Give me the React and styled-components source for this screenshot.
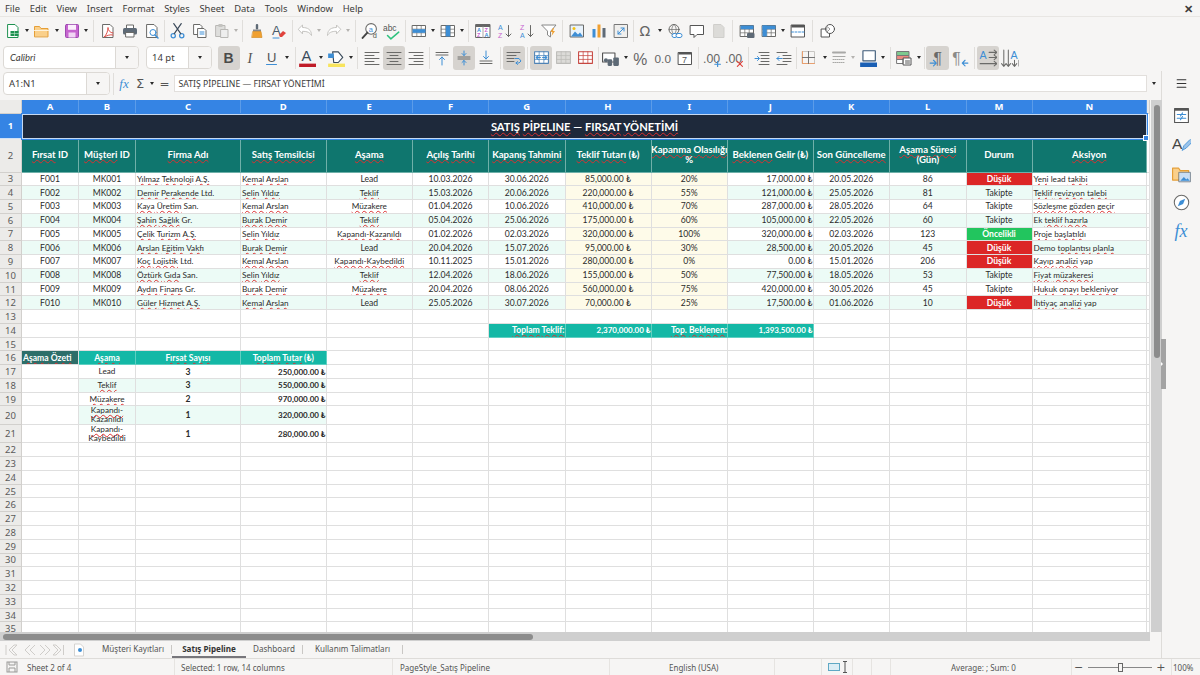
import React from 'react';
import styled, { createGlobalStyle } from 'styled-components';
import { Menu as MenuIcon } from 'lucide-react';

const GlobalStyle = createGlobalStyle`
    html, body { margin: 0; padding: 0; background: #f6f5f4; }
    * { box-sizing: border-box; }
`;

const UI_FONT = '"Noto Sans", "Open Sans", sans-serif';
const CELL_FONT = 'Lato, "DejaVu Sans", sans-serif';

const Page = styled.div`
    width: 1200px;
    height: 675px;
    overflow: hidden;
    display: flex;
    flex-direction: column;
    position: relative;
    background: #f6f5f4;
    font-family: ${UI_FONT};
    color: #3d3c3a;
`;
const MenuBar = styled.div`
    height: 17px;
    flex: none;
    display: flex;
    align-items: center;
    justify-content: space-between;
    padding: 0 7px 0 5px;
    font-size: 9.4px;
    border-bottom: 1px solid #e8e6e3;
`;
const MenuItems = styled.div`
    display: flex;
    gap: 9.8px;
`;
const CloseX = styled.span`
    font-size: 11px;
    font-weight: 700;
`;
const ToolBar = styled.div`
    height: ${p => p.$h}px;
    flex: none;
    display: flex;
    align-items: center;
    padding-left: ${p => p.$pad}px;
`;
const Slot = styled.div`
    flex: none;
    width: ${p => p.$w || 22}px;
    height: 24px;
    display: flex;
    align-items: center;
    justify-content: center;
    border-radius: 3px;
    background: ${p => (p.$active ? '#d6d3cf' : 'transparent')};
`;
const Arrow = styled.i`
    width: 0;
    height: 0;
    border-left: 2.5px solid transparent;
    border-right: 2.5px solid transparent;
    border-top: 3px solid ${p => (p.$off ? '#b5b3b0' : '#2a2a2a')};
`;
const Sep = styled.div`
    flex: none;
    width: ${p => p.$w}px;
    height: 22px;
    display: flex;
    justify-content: center;
    &::after {
        content: '';
        width: 1px;
        background: #e0dedb;
    }
`;
const Combo = styled.div`
    flex: none;
    width: ${p => p.$w}px;
    height: 23px;
    margin-right: ${p => p.$mr || 0}px;
    display: flex;
    background: #fff;
    border: 1px solid #dcd9d5;
    border-radius: 4px;
    overflow: hidden;
`;
const ComboText = styled.div`
    flex: 1;
    display: flex;
    align-items: center;
    padding-left: ${p => p.$pl || 5}px;
    font-size: 9.5px;
    font-style: ${p => (p.$italic ? 'italic' : 'normal')};
    font-family: ${p => (p.$italic ? CELL_FONT : UI_FONT)};
`;
const ComboBtn = styled.div`
    flex: none;
    width: 23px;
    display: flex;
    align-items: center;
    justify-content: center;
    background: #f6f5f4;
    border-left: 1px solid #dcd9d5;
`;
const Body = styled.div`
    flex: 1;
    min-height: 0;
    display: flex;
`;
const WorkArea = styled.div`
    width: 1162px;
    flex: none;
    display: flex;
    flex-direction: column;
    border-right: 1px solid #dedcd9;
`;
const FormulaBar = styled.div`
    height: 25px;
    flex: none;
    display: flex;
    align-items: center;
    padding-left: 3px;
`;
const FxText = styled.span`
    font-family: "Liberation Serif", serif;
    font-style: italic;
    font-size: ${p => p.$size || 13}px;
    color: #3d8ed5;
`;
const SumText = styled.span`
    font-family: "DejaVu Sans", sans-serif;
    font-size: ${p => p.$size}px;
    color: #555;
`;
const FormulaInput = styled.div`
    flex: none;
    width: 973px;
    height: 17px;
    margin-left: 0.5px;
    padding-left: 4px;
    display: flex;
    align-items: center;
    background: #fff;
    border: 1px solid #e2dfdc;
    font-size: 8.7px;
`;
const SheetRow = styled.div`
    flex: 1;
    min-height: 0;
    margin-top: 4px;
    display: flex;
`;
const Sheet = styled.div`
    width: 1150px;
    flex: none;
    overflow: hidden;
    background: #fff;
    display: grid;
    grid-template-columns: ${p => p.$cols};
    grid-template-rows: ${p => p.$rows};
    font-family: ${CELL_FONT};
`;
const Cell = styled.div`
    min-width: 0;
    display: flex;
    align-items: center;
    justify-content: ${p => p.$align || 'flex-start'};
    white-space: nowrap;
    text-align: center;
    overflow: hidden;
    line-height: ${p => (p.$wrap ? '9px' : 'normal')};
    padding: ${p => (p.$align === 'flex-end' ? '0 0 0 1px' : '0 1px')};
    font-size: ${p => p.$size || 8.6}px;
    font-weight: ${p => (p.$bold ? 700 : 400)};
    color: ${p => p.$color || '#2b2b2b'};
    background: ${p => p.$bg || '#fff'};
    border-right: 1px solid ${p => p.$line || '#dfdfdf'};
    border-bottom: 1px solid ${p => p.$line || '#dfdfdf'};
`;
const HeadCell = styled(Cell)`
    font-family: ${UI_FONT};
    font-size: 9.5px;
    justify-content: center;
    font-weight: ${p => (p.$on ? 700 : 400)};
    color: ${p => (p.$on ? '#fff' : '#5a5a5a')};
    background: ${p => (p.$on ? '#3584e4' : '#ecebe9')};
    border-right: 1px solid ${p => (p.$on ? '#5b9ce9' : '#d2d0cd')};
    border-bottom: 1px solid ${p => (p.$on ? '#cfe1f7' : '#d2d0cd')};
`;
const TableHead = styled(Cell)`
    justify-content: center;
    line-height: 10px;
    padding: 0;
    font-size: 9.6px;
    font-weight: 700;
    color: #fff;
    background: #0f766e;
    border-color: #6fb0a9;
`;
const TitleCell = styled(Cell)`
    grid-column: span 14;
    position: relative;
    overflow: visible;
    justify-content: center;
    font-size: 11.2px;
    font-weight: 700;
    color: #fff;
    background: #1e293b;
    border: none;
`;
const Selection = styled.div`
    position: absolute;
    inset: 0;
    border: 1px solid #c5d9f2;
    outline: 1px solid #3584e4;
    pointer-events: none;
    &::after {
        content: '';
        position: absolute;
        right: -3px;
        bottom: -3px;
        width: 4px;
        height: 4px;
        background: #3584e4;
        border: 0.5px solid #fff;
    }
`;
const Spell = styled.span`
    text-decoration: underline wavy #dc2f2f 0.6px;
    text-underline-offset: 1px;
    text-decoration-skip-ink: none;
`;
const VScroll = styled.div`
    flex: 1;
    margin-left: 1px;
    background: #cfcfcf;
    padding: 5px 2.5px 0;
`;
const VThumb = styled.div`
    height: 253px;
    width: 6px;
    border-radius: 3px;
    background: #8c8c8c;
`;
const HScrollRow = styled.div`
    height: 9px;
    flex: none;
    width: 1150px;
    background: #cfcfcf;
    padding: 1.5px 3px;
`;
const HThumb = styled.div`
    height: 6px;
    width: 530px;
    border-radius: 3px;
    background: #8c8c8c;
`;
const TabBar = styled.div`
    height: 17px;
    flex: none;
    display: flex;
    align-items: center;
    padding-left: 5px;
    font-size: 8.1px;
`;
const TabNav = styled.div`
    width: 62px;
    flex: none;
    display: flex;
`;
const NewTab = styled.div`
    width: 22px;
    margin-left: 6px;
    flex: none;
    display: flex;
    align-items: center;
    gap: 1px;
`;
const Tab = styled.div`
    flex: none;
    height: 100%;
    width: ${p => p.$w}px;
    display: flex;
    align-items: center;
    justify-content: center;
    font-weight: ${p => (p.$on ? 700 : 400)};
    color: ${p => (p.$on ? '#333' : '#555')};
    border-bottom: 2px solid ${p => (p.$on ? '#77767b' : 'transparent')};
`;
const TabSep = styled.div`
    width: 1px;
    height: 9px;
    flex: none;
    background: #c9c7c4;
`;
const SideBar = styled.div`
    flex: 1;
    display: flex;
    flex-direction: column;
    align-items: center;
    padding-top: 2px;
    gap: 7.5px;
`;
const SideBtn = styled.div`
    width: 22px;
    height: 21.5px;
    display: flex;
    align-items: center;
    justify-content: center;
    &:first-child {
        margin-bottom: 3px;
    }
`;
const SideHandle = styled.div`
    position: absolute;
    left: 1161px;
    top: 339px;
    width: 4.5px;
    height: 50px;
    background: #a3a3a3;
    display: flex;
    align-items: center;
    &::after {
        content: '';
        border-left: 2.5px solid #fff;
        border-top: 2.5px solid transparent;
        border-bottom: 2.5px solid transparent;
    }
`;
const StatusBar = styled.div`
    height: 17px;
    flex: none;
    display: flex;
    align-items: center;
    font-size: 8px;
    color: #555;
    border-top: 1px solid #dedcd9;
`;
const StatusCell = styled.div`
    flex: none;
    width: ${p => p.$w}px;
    height: 100%;
    display: flex;
    align-items: center;
    gap: ${p => p.$gap || 0}px;
    padding-left: ${p => p.$pl || 0}px;
    border-right: 1px solid ${p => (p.$noline ? 'transparent' : '#e6e4e1')};
`;
const Slider = styled.div`
    width: 64px;
    height: 1px;
    margin: 0 4px 0 5px;
    background: #888;
    display: flex;
    justify-content: center;
    align-items: center;
    &::after {
        content: '';
        width: 3px;
        height: 7px;
        border: 1px solid #666;
        background: #f6f5f4;
    }
`;

// icons
const Ico = ({ children, s = 16 }) => (
    <svg width={s} height={s} viewBox="0 0 16 16" fill="none" strokeLinecap="round" strokeLinejoin="round">{children}</svg>
);
const GREY = '#6a6a68';
const BLUE = '#3d8ed5';
const Lines = ({ rows, c = GREY }) => rows.map(([x1, x2, y], i) => <path key={i} d={`M${x1} ${y}H${x2}`} stroke={c} />);
const Grid = ({ c = GREY, fill }) => (
    <>
        <rect x="1.5" y="2.5" width="13" height="11" fill={fill || '#fff'} stroke={c} />
        <path d="M1.5 6.2h13M1.5 9.8h13M5.8 2.5v11M10.2 2.5v11" stroke={c} strokeWidth=".7" />
    </>
);
const Txt = ({ x, y, c = GREY, size = 8, w = 400, i, f = 'Liberation Sans', children }) => (
    <text x={x} y={y} fill={c} fontSize={size} fontWeight={w} fontStyle={i ? 'italic' : 'normal'} fontFamily={f}>{children}</text>
);

const ICONS = {
    new: <Ico><path d="M3 1.5h7l3 3v10H3z" fill="#fff" stroke="#1e9150" /><rect x="5.5" y="8" width="8" height="5" fill="#1e9150" /><path d="M5.5 10.5h8M9.5 8v5" stroke="#bfe6cc" strokeWidth=".6" /></Ico>,
    open: <Ico><path d="M.5 13.5v-10h5l1.5 2h7v8z" fill="#fad08b" stroke="#e59f37" /><path d="M.5 7.5h14" stroke="#fff3dc" /></Ico>,
    save: <Ico><rect x="1.5" y="1.5" width="13" height="13" rx="1" fill="#c664cf" stroke="#9d4ab0" /><rect x="4" y="1.8" width="8" height="5" fill="#fbeefc" /><rect x="4.5" y="9.5" width="7" height="5" fill="#f1d5f4" /></Ico>,
    pdf: <Ico><path d="M3 1.5h7l3 3v10H3z" fill="#fff" stroke={GREY} /><path d="M13 10c-3 0-5-3-5-5.5C8 8 6.5 12 4 14c2.500-1 6-3 9-2" stroke="#e0504a" /></Ico>,
    print: <Ico><path d="M4.500 5V2h7v3" fill="#fff" stroke={GREY} /><rect x="1" y="5" width="14" height="6.500" rx="1.500" fill="#5e6a76" /><rect x="4" y="9.500" width="8" height="4.500" fill="#fff" stroke={GREY} /></Ico>,
    preview: <Ico><path d="M3 1.500h7l3 3v10H3z" fill="#fff" stroke={GREY} /><circle cx="9" cy="9.500" r="3" stroke={BLUE} /><path d="M11 12l3 3" stroke={BLUE} strokeWidth="1.500" /></Ico>,
    cut: <Ico s={17}><circle cx="4" cy="13" r="2" stroke={BLUE} strokeWidth="1.200" /><circle cx="12" cy="13" r="2" stroke={BLUE} strokeWidth="1.200" /><path d="M5 11L11.500 1.500M11 11L4.500 1.500" stroke="#3b4a5a" strokeWidth="1.100" /></Ico>,
    copy: <Ico><path d="M2 1.500h6l2 2v8H2z" fill="#fff" stroke={GREY} /><path d="M6 5.500h6l2 2v7H6z" fill="#fff" stroke={GREY} /><path d="M8 9h4M8 11h4" stroke={BLUE} /></Ico>,
    paste: <Ico><rect x="2" y="2.500" width="9" height="11" fill="#dededc" stroke="#b9b8b5" /><rect x="7" y="6.500" width="7" height="8" fill="#eee" stroke="#b9b8b5" /><rect x="4.500" y="1" width="4" height="3" fill="#c4c3c0" /></Ico>,
    clone: <Ico><rect x="6.800" y="1" width="2.400" height="5.500" rx="1" fill="#5e6a76" /><rect x="4" y="6.500" width="8" height="2" fill="#888" /><path d="M4 8.500h8l1 6H3z" fill="#f0a030" stroke="#d08418" strokeWidth=".6" /></Ico>,
    clear: <Ico><Txt x="1" y="11.500" size="13" c="#4a5a6a">A</Txt><path d="M8 12l4-4 3 2-4 4H9z" fill="#e0433c" /><path d="M2 15h6" stroke={BLUE} /></Ico>,
    undo: <Ico><path d="M1.500 6L5.500 2v2.500c5 0 9 2 9 8-1.500-3-4-4.200-9-4.200V10.500z" fill="#fff" stroke="#c6c5c2" /></Ico>,
    redo: <Ico><path d="M14.500 6L10.500 2v2.500c-5 0-9 2-9 8 1.500-3 4-4.200 9-4.200v2.200z" fill="#fff" stroke="#c6c5c2" /></Ico>,
    find: <Ico s={17}><circle cx="9.500" cy="6.500" r="5" stroke={GREY} fill="#fff" /><path d="M6 10l-4.500 5" stroke="#444" strokeWidth="1.800" /><Txt x="7.300" y="9" size="7" c={BLUE}>a</Txt><Txt x="11" y="15.500" size="7" c="#555">d</Txt></Ico>,
    spell: <Ico s={18}><Txt x="0" y="8" size="7.500" c="#555">abc</Txt><path d="M4 12l3 3 7-6" stroke="#2ec27e" strokeWidth="1.300" /></Ico>,
    rows: <Ico><Grid /><rect x="1.500" y="6.200" width="13" height="3.600" fill={BLUE} /></Ico>,
    cols: <Ico><Grid /><rect x="5.800" y="2.500" width="4.400" height="11" fill={BLUE} /></Ico>,
    sort: <Ico><rect x="1" y="1.500" width="14" height="13" fill="#fff" stroke="#666" /><rect x="1" y="1.500" width="14" height="2.500" fill="#666" /><path d="M8 4v10.500" stroke="#aaa" /><Txt x="2" y="9" size="5.500" c="#3d8ed5" w={700}>A</Txt><Txt x="2" y="14" size="5.500" c="#c664cf" w={700}>Z</Txt><Txt x="9.500" y="9" size="5.500" c="#c664cf" w={700}>Z</Txt><Txt x="9.500" y="14" size="5.500" c="#3d8ed5" w={700}>A</Txt></Ico>,
    asc: <Ico><Txt x="1" y="7" size="7" c={BLUE}>A</Txt><Txt x="1" y="15" size="7" c="#c664cf">Z</Txt><path d="M11.500 2.500v11M9 11l2.500 2.500L14 11" stroke={GREY} /></Ico>,
    desc: <Ico><Txt x="1" y="7" size="7" c="#c664cf">Z</Txt><Txt x="1" y="15" size="7" c={BLUE}>A</Txt><path d="M11.500 2.500v11M9 11l2.500 2.500L14 11" stroke={GREY} /></Ico>,
    filter: <Ico><path d="M1 2h14L9.500 8.500V14L6.500 12V8.500z" fill="#fff" stroke="#888" /><path d="M12 5l-2.500 4h2l-1 4 3.500-5h-2l1-3z" fill="#f0a030" /></Ico>,
    image: <Ico><rect x="1.500" y="2" width="13" height="12" fill="#e8f2fb" stroke={GREY} /><circle cx="5" cy="5.500" r="1.500" fill="#f5c211" /><path d="M2 13.500l4-5 3 3 2-2 3 4z" fill={BLUE} /></Ico>,
    chart: <Ico><rect x="1.500" y="6" width="3" height="8.500" fill={BLUE} /><rect x="6.500" y="1.500" width="3" height="13" fill="#f0a030" /><rect x="11.500" y="5" width="3" height="9.500" fill="#5e6a76" /></Ico>,
    pivot: <Ico><rect x="1.500" y="1.500" width="13" height="13" fill="#f0efed" stroke="#777" /><path d="M5 11l6-6M8 5h3v3M8 11H5V8" stroke={BLUE} /></Ico>,
    omega: <Ico><Txt x="1.500" y="13" size="14" c="#666" f="DejaVu Sans">Ω</Txt></Ico>,
    link: <Ico><circle cx="7" cy="6.500" r="5" stroke={GREY} /><path d="M2 6.500h10M7 1.500c-3 3-3 7 0 10M7 1.500c3 3 3 7 0 10" stroke={GREY} strokeWidth=".7" /><rect x="5" y="10.500" width="5" height="4" rx="2" stroke={BLUE} fill="#fff" /><rect x="9" y="10.500" width="6" height="4" rx="2" stroke={BLUE} fill="#fff" /></Ico>,
    comment: <Ico><path d="M1.500 2.500h13v9H8l-3 3v-3H1.500z" fill="#fff" stroke="#555" /></Ico>,
    header: <Ico><path d="M3 1.500h7l3 3v10H3z" fill="#dcdbd8" stroke="#cfcecb" /></Ico>,
    printArea: <Ico><Grid /><rect x="1.500" y="2.500" width="13" height="3.700" fill={BLUE} /><rect x="8" y="10" width="7.500" height="5" rx="1" fill="#5e6a76" /></Ico>,
    freeze: <Ico><Grid /><rect x="1.500" y="2.500" width="4.300" height="11" fill={BLUE} /><rect x="1.500" y="2.500" width="13" height="3.700" fill={BLUE} /></Ico>,
    split: <Ico><rect x="1.500" y="2" width="13" height="12" fill="#fff" stroke="#555" /><rect x="1.500" y="2" width="13" height="2.500" fill="#555" /><path d="M1.500 9h13" stroke={BLUE} strokeDasharray="2 1.500" /></Ico>,
    shapes: <Ico><rect x="1.500" y="6" width="8" height="8" stroke="#555" fill="#fff" /><circle cx="10" cy="6" r="4.500" stroke="#555" fill="#fff" /><path d="M7 3.500l3 2.500-3 3z" stroke="#999" /></Ico>,

    bold: <Ico><Txt x="2.500" y="13" size="14" w={700} c="#4a4a48">B</Txt></Ico>,
    italic: <Ico><Txt x="4.500" y="13" size="14" i f="Liberation Serif" c="#555">I</Txt></Ico>,
    underline: <Ico><Txt x="3" y="12" size="13" c="#555">U</Txt><path d="M2.500 14.500h10" stroke={BLUE} /></Ico>,
    fontColor: <Ico s={18}><Txt x="3" y="11" size="13" c="#3a4a5a">A</Txt><rect x="1" y="13" width="16" height="3.500" fill="#c01c28" /></Ico>,
    highlight: <Ico s={18}><path d="M5 2.500h5l4 5-4 4.500H6z" fill="#fff" stroke="#3a4a5a" /><rect x="1" y="13" width="16" height="3.500" fill="#f8e45c" /><path d="M1 4h5v4H1z" fill={BLUE} /></Ico>,
    alignL: <Ico><Lines rows={[[1, 15, 2.500], [1, 10, 5.500], [1, 15, 8.500], [1, 10, 11.500], [1, 15, 14.500]]} /></Ico>,
    alignC: <Ico><Lines rows={[[1, 15, 2.500], [4, 12, 5.500], [1, 15, 8.500], [4, 12, 11.500], [1, 15, 14.500]]} /></Ico>,
    alignR: <Ico><Lines rows={[[1, 15, 2.500], [6, 15, 5.500], [1, 15, 8.500], [6, 15, 11.500], [1, 15, 14.500]]} /></Ico>,
    top: <Ico><Lines rows={[[2, 14, 2.500], [2, 14, 5]]} /><path d="M8 15V7M5.500 9.500L8 7l2.500 2.500" stroke={BLUE} /></Ico>,
    middle: <Ico><Lines rows={[[2, 14, 7], [2, 14, 9]]} /><path d="M8 1v4.500M6 3.500l2 2 2-2M8 15v-4.500M6 12.500l2-2 2 2" stroke={BLUE} /></Ico>,
    bottom: <Ico><Lines rows={[[2, 14, 11], [2, 14, 13.500]]} /><path d="M8 1v8M5.500 6.500L8 9l2.500-2.500" stroke={BLUE} /></Ico>,
    wrap: <Ico><Lines rows={[[1, 14, 2.500], [1, 10, 5.500], [1, 8, 8.500], [1, 8, 11.500]]} /><path d="M9 8.500h4l2 2.500-2 2H10M11.500 11.500L10 13l1.500 1.500" stroke={BLUE} /></Ico>,
    merge: <Ico s={17}><Grid c="#4f83b5" /><path d="M3 8h4M5 6L3 8l2 2M13 8H9M11 6l2 2-2 2" stroke={BLUE} /></Ico>,
    unmerge: <Ico s={17}><Grid c="#bcbbb8" fill="#dcdbd8" /></Ico>,
    splitMerge: <Ico s={17}><Grid c="#c64640" /></Ico>,
    currency: <Ico s={18}><rect x="0.500" y="3.500" width="11" height="8" fill="#fff" stroke="#555" /><rect x="5" y="9" width="4" height="6" rx="1" fill="#5e6a76" /><rect x="10" y="7.500" width="5" height="7.500" rx="1" fill="#5e6a76" /><circle cx="3.500" cy="10" r="1.800" fill="#5e6a76" /></Ico>,
    percent: <Ico s={18}><Txt x="1" y="14" size="14" c="#666">%</Txt></Ico>,
    number: <Ico s={18}><Txt x="0.500" y="12.500" size="10.500" c="#666">0.0</Txt></Ico>,
    date: <Ico><rect x="1.500" y="2.500" width="13" height="12" fill="#fff" stroke="#555" /><rect x="1.500" y="2.500" width="13" height="2" fill="#555" /><Txt x="5" y="13" size="9" c="#555">7</Txt></Ico>,
    addDec: <Ico s={18}><Txt x="0" y="12" size="11" c="#666">.00</Txt><path d="M13 11v5M10.500 13.500h5" stroke={BLUE} /></Ico>,
    delDec: <Ico s={18}><Txt x="0" y="12" size="11" c="#666">.00</Txt><path d="M11 11l4.500 4.500M15.500 11L11 15.500" stroke="#e0433c" /></Ico>,
    indent: <Ico><Lines rows={[[5, 15, 2.500], [7, 15, 5.500], [7, 15, 8.500], [7, 15, 11.500], [5, 15, 14.500]]} /><path d="M1 8.500h4M3.500 6.500l2 2-2 2" stroke={BLUE} /></Ico>,
    dedent: <Ico><Lines rows={[[1, 11, 2.500], [7, 15, 5.500], [7, 15, 8.500], [7, 15, 11.500], [1, 11, 14.500]]} /><path d="M6 8.500H1M3 6.500l-2 2 2 2" stroke={BLUE} /></Ico>,
    borders: <Ico><path d="M1.500 1.500h12v12h-12z" stroke="#c8c6c3" /><path d="M1.500 13.500h12M1.500 1.500v12" stroke="#e8a070" /><path d="M7.500 1.500v12M1.500 7.500h12" stroke="#666" strokeWidth=".9" /></Ico>,
    lineStyle: <Ico><path d="M2 2.500h12" stroke="#a8a8a6" strokeWidth="2" /><path d="M2 6.500h12" stroke="#a8a8a6" /><path d="M2 9.500h12M2 12.500h12" stroke="#a8a8a6" strokeDasharray="1 1" /></Ico>,
    borderColor: <Ico s={18}><rect x="3.500" y="1.500" width="11" height="9" stroke="#3d5a78" fill="#fff" /><path d="M1 12h16v4H1z" fill="#1a5fb4" /></Ico>,
    cond: <Ico><rect x="1" y="1.500" width="12" height="4" fill="#7ec98f" stroke="#777" /><rect x="1" y="5.500" width="12" height="4" fill="#ec8a80" stroke="#777" /><rect x="1" y="9.500" width="6" height="4" fill="#fff" stroke="#777" /><rect x="7.500" y="8" width="7.500" height="7" fill="#fff" stroke="#555" /><path d="M9.500 11h4M9.500 13h4" stroke="#555" /></Ico>,
    ltr: <Ico s={18}><Txt x="4" y="13" size="14" c={GREY}>¶</Txt><path d="M1 12.500h5M4 10l2.500 2.500L4 15" stroke={BLUE} /></Ico>,
    rtl: <Ico s={18}><Txt x="1" y="13" size="14" c="#8b8b89">¶</Txt><path d="M15 12.500h-5M12.500 10L10 12.500l2.500 2.500" stroke={BLUE} /></Ico>,
    textLR: <Ico s={18}><Txt x="0.500" y="8.500" size="9.500" c={BLUE}>A</Txt><path d="M9 3h7M13.500 1L16 3l-2.500 2M9 7.500h7M13.500 5.500L16 7.500l-2.500 2M1 13h15M13.500 11l2.500 2-2.500 2" stroke={GREY} strokeWidth=".9" /></Ico>,
    textTB: <Ico s={18}><Txt x="8.500" y="8.500" size="9.500" c={BLUE}>A</Txt><path d="M2.500 1v14M.5 13l2 2.500L4.500 13M6.500 1v14M4.500 13l2 2.500L8.500 13M12 10v5M10 13l2 2.500L14 13M16 10v5" stroke={GREY} strokeWidth=".9" /></Ico>,

    sideProps: <Ico s={17}><rect x="1.500" y="1.500" width="13" height="13" fill="#fff" stroke="#555" /><rect x="1.500" y="1.500" width="13" height="2" fill="#555" /><path d="M4 7h8M4 10.500h8" stroke={BLUE} /><path d="M9 5.500L7 8.500M9 9L7 12" stroke={BLUE} /></Ico>,
    sideStyles: <Ico s={19}><Txt x="0" y="12" size="13" c="#444">A</Txt><path d="M15 4l-5 5-1.500 4 3.500-2 5-5z" fill="#9ac3ea" stroke={BLUE} strokeWidth=".7" /></Ico>,
    sideGallery: <Ico s={19}><path d="M.5 13.500v-10h5l1.500 2h7v8z" fill="#fad08b" stroke="#e59f37" /><rect x="6" y="7" width="9.500" height="8" fill="#c9def4" stroke="#5e6a76" strokeWidth=".6" /><path d="M7 14l3-3 2 2 1-1 2 2z" fill={BLUE} /></Ico>,
    sideNav: <Ico s={17}><circle cx="8" cy="8" r="6.800" stroke={GREY} fill="#fff" /><path d="M11.500 4.500L9.500 9.500 4.500 11.500 6.500 6.500z" fill={BLUE} /></Ico>,
};

// toolbar data: [icon, width, active], 'dd' arrow, number = separator width
const TOP_BAR = [
    ['new'], ['dd', 7.5], ['open'], ['dd', 7.5], ['save'], ['dd', 7], 7,
    ['pdf'], ['print'], ['preview'], 4,
    ['cut'], ['copy'], ['paste'], ['off', 7], 6,
    ['clone'], ['clear'], 5,
    ['undo', 20], ['off', 9], ['redo', 20], ['off', 9], 6,
    ['find'], ['spell'], 5,
    ['rows'], ['dd', 7], ['cols'], ['dd', 7], 6,
    ['sort'], ['asc'], ['desc'], ['filter'], 6,
    ['image'], ['chart'], ['pivot'], 3,
    ['omega'], ['dd', 7], ['link'], ['comment'], ['header'], 6,
    ['printArea'], ['freeze'], ['dd', 7], ['split'], 8,
    ['shapes'],
];
const FORMAT_BAR = [
    ['bold', 22, true], ['italic'], ['underline', 20], ['dd', 10], 6,
    ['fontColor', 18], ['dd', 9], ['highlight'], ['dd', 7], 7,
    ['alignL'], ['alignC', 22, true], ['alignR'], 4,
    ['top'], ['middle', 22, true], ['bottom'], 6,
    ['wrap', 22, true], 5, ['merge', 22, true], ['unmerge'], ['splitMerge'], 4,
    ['currency'], ['dd', 8], ['percent'], ['number'], ['date'], 5,
    ['addDec'], ['delDec'], 6,
    ['indent'], ['dedent'], 3,
    ['borders'], ['dd', 10], ['lineStyle', 18], ['off', 10], ['borderColor', 20], ['dd', 9], 6,
    ['cond'], ['dd', 7], 4,
    ['ltr', 23, true], ['rtl'], 6,
    ['textLR', 22, true], ['textTB'],
];

const renderBar = (items) => items.map((it, i) => {
    if (typeof it === 'number') return <Sep key={i} $w={it} />;
    const [name, w, active] = it;
    if (name === 'dd' || name === 'off') return <Slot key={i} $w={w}><Arrow $off={name === 'off'} /></Slot>;
    return <Slot key={i} $w={w} $active={active}>{ICONS[name]}</Slot>;
});

const NO_SPELL = new Set(['Lead', 'lead', 'Ltd.', 'San.', 'Gr.', 'Demo', 'yap', 'Ek', 'ID', 'Son', 'Durum', '%', '(₺)', '—', 'Gelir', '(Gün)']);

// wavy spell-check line under each word LibreOffice flags, | starts a new line
const spell = (text) => (
    <span>
        {text.split('|').map((line, l) => (
            <React.Fragment key={l}>
                {l > 0 && <br />}
                {line.split(' ').map((w, i) => (
                    <React.Fragment key={i}>
                        {i > 0 && ' '}
                        {NO_SPELL.has(w) ? w : <Spell>{w}</Spell>}
                    </React.Fragment>
                ))}
            </React.Fragment>
        ))}
    </span>
);

const COLS = ['A', 'B', 'C', 'D', 'E', 'F', 'G', 'H', 'I', 'J', 'K', 'L', 'M', 'N'];
const COL_WIDTHS = [22, 57, 57, 105, 85.5, 86.5, 76, 76.5, 86, 76.5, 85.5, 76.5, 76.5, 66, 114.5, 3];
const HEADERS = ['Fırsat ID', 'Müşteri ID', 'Firma Adı', 'Satış Temsilcisi', 'Aşama', 'Açılış Tarihi', 'Kapanış Tahmini', 'Teklif Tutarı (₺)', 'Kapanma Olasılığı|%', 'Beklenen Gelir (₺)', 'Son Güncelleme', 'Aşama Süresi|(Gün)', 'Durum', 'Aksiyon'];
const ROWS = [
    ['F001', 'MK001', 'Yılmaz Teknoloji A.Ş.', 'Kemal Arslan', 'Lead', '10.03.2026', '30.06.2026', '85,000.00 ₺', '20%', '17,000.00 ₺', '20.05.2026', '86', 'Düşük', 'Yeni lead takibi'],
    ['F002', 'MK002', 'Demir Perakende Ltd.', 'Selin Yıldız', 'Teklif', '15.03.2026', '20.06.2026', '220,000.00 ₺', '55%', '121,000.00 ₺', '25.05.2026', '81', 'Takipte', 'Teklif revizyon talebi'],
    ['F003', 'MK003', 'Kaya Üretim San.', 'Kemal Arslan', 'Müzakere', '01.04.2026', '10.06.2026', '410,000.00 ₺', '70%', '287,000.00 ₺', '28.05.2026', '64', 'Takipte', 'Sözleşme gözden geçir'],
    ['F004', 'MK004', 'Şahin Sağlık Gr.', 'Burak Demir', 'Teklif', '05.04.2026', '25.06.2026', '175,000.00 ₺', '60%', '105,000.00 ₺', '22.05.2026', '60', 'Takipte', 'Ek teklif hazırla'],
    ['F005', 'MK005', 'Çelik Turizm A.Ş.', 'Selin Yıldız', 'Kapandı-Kazanıldı', '01.02.2026', '02.03.2026', '320,000.00 ₺', '100%', '320,000.00 ₺', '02.03.2026', '123', 'Öncelikli', 'Proje başlatıldı'],
    ['F006', 'MK006', 'Arslan Eğitim Vakfı', 'Burak Demir', 'Lead', '20.04.2026', '15.07.2026', '95,000.00 ₺', '30%', '28,500.00 ₺', '20.05.2026', '45', 'Düşük', 'Demo toplantısı planla'],
    ['F007', 'MK007', 'Koç Lojistik Ltd.', 'Kemal Arslan', 'Kapandı-Kaybedildi', '10.11.2025', '15.01.2026', '280,000.00 ₺', '0%', '0.00 ₺', '15.01.2026', '206', 'Düşük', 'Kayıp analizi yap'],
    ['F008', 'MK008', 'Öztürk Gıda San.', 'Selin Yıldız', 'Teklif', '12.04.2026', '18.06.2026', '155,000.00 ₺', '50%', '77,500.00 ₺', '18.05.2026', '53', 'Takipte', 'Fiyat müzakeresi'],
    ['F009', 'MK009', 'Aydın Finans Gr.', 'Burak Demir', 'Müzakere', '20.04.2026', '08.06.2026', '560,000.00 ₺', '75%', '420,000.00 ₺', '30.05.2026', '45', 'Takipte', 'Hukuk onayı bekleniyor'],
    ['F010', 'MK010', 'Güler Hizmet A.Ş.', 'Kemal Arslan', 'Lead', '25.05.2026', '30.07.2026', '70,000.00 ₺', '25%', '17,500.00 ₺', '01.06.2026', '10', 'Düşük', 'İhtiyaç analizi yap'],
];
const SUMMARY = [
    ['Lead', '3', '250,000.00 ₺', 13.8],
    ['Teklif', '3', '550,000.00 ₺', 13.7],
    ['Müzakere', '2', '970,000.00 ₺', 13.8],
    ['Kapandı-|Kazanıldı', '1', '320,000.00 ₺', 19],
    ['Kapandı-|Kaybedildi', '1', '280,000.00 ₺', 18],
];
const LAST_ROW = 35;
const rowHeights = [13.5, 25.5, 33.5];
for (let r = 3; r <= LAST_ROW; r++) {
    const s = SUMMARY[r - 17];
    rowHeights.push(s ? s[3] : r === 16 ? 13.7 : 13.77);
}

const MINT = '#ecfbf6';
const CREAM = '#fefbe9';
const TOTAL = '#14b8a6';
const STATUS = { 'Düşük': '#dc2626', 'Öncelikli': '#22c55e' };
const CENTER_COLS = [0, 1, 4, 5, 6, 7, 8, 10, 11, 12];
const TEXT_SIZE = 8.2;
const MONEY_BOLD_SIZE = 8;

const DataRow = ({ row, index }) => row.map((value, c) => {
    let bg = index % 2 ? MINT : '#fff';
    if (c === 7 || c === 8) bg = CREAM;
    const status = c === 12 && STATUS[value];
    const align = c === 9 ? 'flex-end' : CENTER_COLS.includes(c) ? 'center' : 'flex-start';
    const flagged = c === 2 || c === 3 || c === 13 || (c === 4 && value !== 'Lead');
    return (
        <Cell key={c} $align={align} $bg={status || bg} $size={flagged ? TEXT_SIZE : undefined} $color={status ? '#fff' : undefined} $bold={!!status}>
            {flagged ? spell(value) : value}
        </Cell>
    );
});

const RowHead = ({ n, on }) => <HeadCell $on={on}>{n}</HeadCell>;
const Blank = ({ from = 1, to = 15 }) => {
    const out = [];
    for (let c = from; c <= to; c++) out.push(<Cell key={c} />);
    return out;
};
const TotalCell = ({ align, size, children }) => (
    <Cell $align={align} $size={size} $bold $bg={TOTAL} $color="#fff" $line="#5fd0c2">{children}</Cell>
);

const SpreadSheet = () => {
    const blankRows = [];
    for (let r = 22; r <= LAST_ROW; r++) {
        blankRows.push(
            <React.Fragment key={r}>
                <RowHead n={r} />
                <Blank />
            </React.Fragment>
        );
    }
    return (
        <Sheet
            $cols={COL_WIDTHS.map(w => w + 'px').join(' ')}
            $rows={rowHeights.map(h => h + 'px').join(' ')}
        >
            <HeadCell />
            {COLS.map(c => <HeadCell key={c} $on>{c}</HeadCell>)}
            <HeadCell />

            <RowHead n={1} on />
            <TitleCell>{spell('SATIŞ PİPELINE — FIRSAT YÖNETİMİ')}<Selection /></TitleCell>
            <Cell />

            <RowHead n={2} />
            {HEADERS.map(h => <TableHead key={h}>{spell(h)}</TableHead>)}
            <Cell />

            {ROWS.map((row, i) => (
                <React.Fragment key={row[0]}>
                    <RowHead n={i + 3} />
                    <DataRow row={row} index={i} />
                    <Cell />
                </React.Fragment>
            ))}

            <RowHead n={13} />
            <Blank />

            <RowHead n={14} />
            <Blank from={1} to={6} />
            <TotalCell align="flex-end">{spell('Toplam Teklif:')}</TotalCell>
            <TotalCell align="flex-end" size={MONEY_BOLD_SIZE}>2,370,000.00 ₺</TotalCell>
            <TotalCell align="flex-end">{spell('Top. Beklenen:')}</TotalCell>
            <TotalCell align="flex-end" size={MONEY_BOLD_SIZE}>1,393,500.00 ₺</TotalCell>
            <Blank from={11} to={15} />

            <RowHead n={15} />
            <Blank />

            <RowHead n={16} />
            <Cell $bold $bg="#2d6e69" $color="#fff">{spell('Aşama Özeti')}</Cell>
            <TotalCell align="center">{spell('Aşama')}</TotalCell>
            <TotalCell align="center">{spell('Fırsat Sayısı')}</TotalCell>
            <TotalCell align="center">{spell('Toplam Tutar (₺)')}</TotalCell>
            <Blank from={5} to={15} />

            {SUMMARY.map(([stage, count, total], i) => (
                <React.Fragment key={stage}>
                    <RowHead n={17 + i} />
                    <Cell />
                    <Cell $align="center" $wrap $size={TEXT_SIZE} $bg={i % 2 ? MINT : '#fff'}>{spell(stage)}</Cell>
                    <Cell $align="center" $bold $bg={i % 2 ? MINT : '#fff'}>{count}</Cell>
                    <Cell $align="flex-end" $bold $size={MONEY_BOLD_SIZE} $bg={i % 2 ? MINT : '#fff'}>{total}</Cell>
                    <Blank from={5} to={15} />
                </React.Fragment>
            ))}

            {blankRows}
        </Sheet>
    );
};

const TabArrows = () => (
    <svg width="60" height="14" viewBox="0 0 60 14" fill="none" stroke="#cfcdca">
        <path d="M1 2v10M9 2L4 7l5 5h3L7 7l5-5zM25 2l-5 5 5 5M30 2l-5 5 5 5M35 2l5 5-5 5M40 2l5 5-5 5M48 2h3l5 5-5 5h-3l5-5zM58.500 2v10" />
    </svg>
);

export default function App() {
    return (
        <>
            <GlobalStyle />
            <Page>
                <MenuBar>
                    <MenuItems>
                        {['File', 'Edit', 'View', 'Insert', 'Format', 'Styles', 'Sheet', 'Data', 'Tools', 'Window', 'Help'].map(m => (
                            <span key={m}>{m}</span>
                        ))}
                    </MenuItems>
                    <CloseX>✕</CloseX>
                </MenuBar>

                <ToolBar $h={27} $pad={1.5}>{renderBar(TOP_BAR)}</ToolBar>
                <ToolBar $h={27} $pad={3}>
                    <Combo $w={136} $mr={7}>
                        <ComboText $italic $pl={6}>Calibri</ComboText>
                        <ComboBtn><Arrow /></ComboBtn>
                    </Combo>
                    <Combo $w={66} $mr={6}>
                        <ComboText>14 pt</ComboText>
                        <ComboBtn><Arrow /></ComboBtn>
                    </Combo>
                    {renderBar(FORMAT_BAR)}
                </ToolBar>

                <Body>
                    <WorkArea>
                        <FormulaBar>
                            <Combo $w={107} $mr={2}>
                                <ComboText $pl={5}>A1:N1</ComboText>
                                <ComboBtn><Arrow /></ComboBtn>
                            </Combo>
                            <Sep $w={3} />
                            <Slot $w={18}><FxText>fx</FxText></Slot>
                            <Slot $w={14}><SumText $size={13}>Σ</SumText></Slot>
                            <Slot $w={9}><Arrow /></Slot>
                            <Slot $w={17}><SumText $size={12}>=</SumText></Slot>
                            <FormulaInput>SATIŞ PİPELINE — FIRSAT YÖNETİMİ</FormulaInput>
                            <Slot $w={14}><Arrow /></Slot>
                        </FormulaBar>
                        <SheetRow>
                            <SpreadSheet />
                            <VScroll><VThumb /></VScroll>
                        </SheetRow>
                        <HScrollRow><HThumb /></HScrollRow>
                        <TabBar>
                            <TabNav><TabArrows /></TabNav>
                            <NewTab>
                                <svg width="12" height="14" viewBox="0 0 12 14" fill="none">
                                    <path d="M1.500 1h6l3 3v9h-9z" fill="#fff" stroke="#d5d3d0" />
                                    <circle cx="7" cy="7" r="2" fill="#3d8ed5" />
                                </svg>
                            </NewTab>
                            <Tab $w={76}>Müşteri Kayıtları</Tab>
                            <TabSep />
                            <Tab $w={74} $on>Satış Pipeline</Tab>
                            <Tab $w={56}>Dashboard</Tab>
                            <TabSep />
                            <Tab $w={99}>Kullanım Talimatları</Tab>
                            <TabSep />
                        </TabBar>
                    </WorkArea>
                    <SideBar>
                        <SideBtn><MenuIcon size={13} color="#333" /></SideBtn>
                        <SideBtn>{ICONS.sideProps}</SideBtn>
                        <SideBtn>{ICONS.sideStyles}</SideBtn>
                        <SideBtn>{ICONS.sideGallery}</SideBtn>
                        <SideBtn>{ICONS.sideNav}</SideBtn>
                        <SideBtn><FxText $size={18}>fx</FxText></SideBtn>
                    </SideBar>
                </Body>

                <StatusBar>
                    <StatusCell $w={175} $pl={6} $gap={8}>
                        <svg width="13" height="13" viewBox="0 0 13 13" fill="none" stroke="#9a9a98">
                            <rect x="1" y="1" width="10" height="10" />
                            <path d="M3 1v3h6V1M3 11V7h6v4" />
                        </svg>
                        <span>Sheet 2 of 4</span>
                    </StatusCell>
                    <StatusCell $w={218} $pl={6}>Selected: 1 row, 14 columns</StatusCell>
                    <StatusCell $w={217} $pl={7}>PageStyle_Satış Pipeline</StatusCell>
                    <StatusCell $w={165} $pl={59}>English (USA)</StatusCell>
                    <StatusCell $w={47} />
                    <StatusCell $w={31} $pl={6}>
                        <svg width="24" height="12" viewBox="0 0 24 12" fill="none">
                            <rect x=".5" y="2.500" width="11" height="7" fill="#dcedf5" stroke="#5fa8c4" />
                            <path d="M15 .5h4M17 .5v11M15 11.500h4" stroke="#555" />
                        </svg>
                    </StatusCell>
                    <StatusCell $w={19} />
                    <StatusCell $w={19} />
                    <StatusCell $w={181} $pl={60}>Average: ; Sum: 0</StatusCell>
                    <StatusCell $w={100} $pl={2}>
                        <SumText $size={11}>−</SumText>
                        <Slider />
                        <SumText $size={11}>+</SumText>
                    </StatusCell>
                    <StatusCell $w={28} $pl={1} $noline>100%</StatusCell>
                </StatusBar>
                <SideHandle />
            </Page>
        </>
    );
}
